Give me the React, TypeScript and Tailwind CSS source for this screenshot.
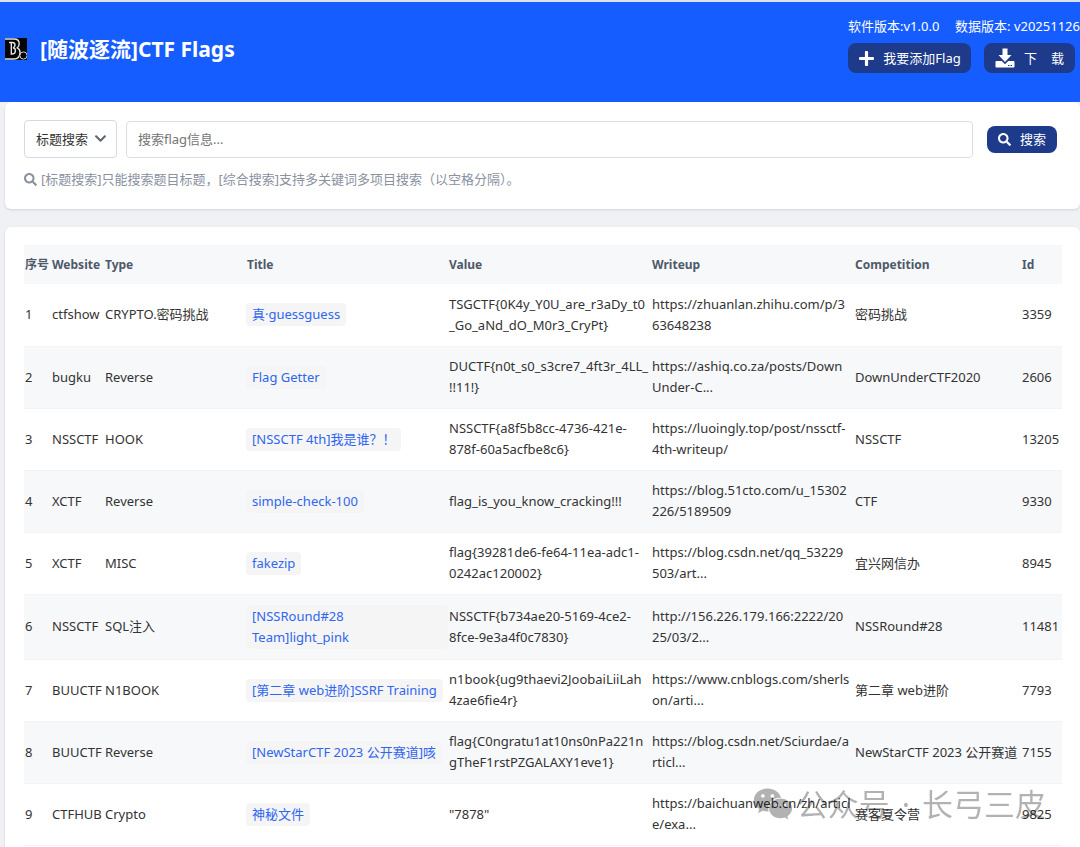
import { useState } from 'react';
import { FaChevronDown, FaPlus, FaSearch, FaWeixin } from 'react-icons/fa';

interface FlagRow {
  website: string;
  type: string;
  title: string;
  value: string;
  writeup: string;
  competition: string;
  id: number;
}

const flags: FlagRow[] = [
  {
    website: 'ctfshow',
    type: 'CRYPTO.密码挑战',
    title: '真·guessguess',
    value: 'TSGCTF{0K4y_Y0U_are_r3aDy_t0\n_Go_aNd_dO_M0r3_CryPt}',
    writeup: 'https://zhuanlan.zhihu.com/p/3\n63648238',
    competition: '密码挑战',
    id: 3359,
  },
  {
    website: 'bugku',
    type: 'Reverse',
    title: 'Flag Getter',
    value: 'DUCTF{n0t_s0_s3cre7_4ft3r_4LL_\n!!11!}',
    writeup: 'https://ashiq.co.za/posts/Down\nUnder-C...',
    competition: 'DownUnderCTF2020',
    id: 2606,
  },
  {
    website: 'NSSCTF',
    type: 'HOOK',
    title: '[NSSCTF 4th]我是谁？！',
    value: 'NSSCTF{a8f5b8cc-4736-421e-\n878f-60a5acfbe8c6}',
    writeup: 'https://luoingly.top/post/nssctf-\n4th-writeup/',
    competition: 'NSSCTF',
    id: 13205,
  },
  {
    website: 'XCTF',
    type: 'Reverse',
    title: 'simple-check-100',
    value: 'flag_is_you_know_cracking!!!',
    writeup: 'https://blog.51cto.com/u_15302\n226/5189509',
    competition: 'CTF',
    id: 9330,
  },
  {
    website: 'XCTF',
    type: 'MISC',
    title: 'fakezip',
    value: 'flag{39281de6-fe64-11ea-adc1-\n0242ac120002}',
    writeup: 'https://blog.csdn.net/qq_53229\n503/art...',
    competition: '宜兴网信办',
    id: 8945,
  },
  {
    website: 'NSSCTF',
    type: 'SQL注入',
    title: '[NSSRound#28\nTeam]light_pink',
    value: 'NSSCTF{b734ae20-5169-4ce2-\n8fce-9e3a4f0c7830}',
    writeup: 'http://156.226.179.166:2222/20\n25/03/2...',
    competition: 'NSSRound#28',
    id: 11481,
  },
  {
    website: 'BUUCTF',
    type: 'N1BOOK',
    title: '[第二章 web进阶]SSRF Training',
    value: 'n1book{ug9thaevi2JoobaiLiiLah\n4zae6fie4r}',
    writeup: 'https://www.cnblogs.com/sherls\non/arti...',
    competition: '第二章 web进阶',
    id: 7793,
  },
  {
    website: 'BUUCTF',
    type: 'Reverse',
    title: '[NewStarCTF 2023 公开赛道]咳',
    value: 'flag{C0ngratu1at10ns0nPa221n\ngTheF1rstPZGALAXY1eve1}',
    writeup: 'https://blog.csdn.net/Sciurdae/a\nrticl...',
    competition: 'NewStarCTF 2023 公开赛道',
    id: 7155,
  },
  {
    website: 'CTFHUB',
    type: 'Crypto',
    title: '神秘文件',
    value: '"7878"',
    writeup: 'https://baichuanweb.cn/zh/articl\ne/exa...',
    competition: '赛客夏令营',
    id: 9825,
  },
];

const columns = [
  { label: '序号', width: 'w-[27px]' },
  { label: 'Website', width: 'w-[53px]' },
  { label: 'Type', width: 'w-[142px]' },
  { label: 'Title', width: 'w-[202px]' },
  { label: 'Value', width: 'w-[203px]' },
  { label: 'Writeup', width: 'w-[203px]' },
  { label: 'Competition', width: 'w-[167px]' },
  { label: 'Id', width: 'w-[41px]' },
];

function Logo() {
  return (
    <svg viewBox="0 0 22 22" className="size-[22px]" aria-hidden="true">
      <rect width="22" height="22" fill="#050505" />
      <path
        d="M0 1h9c3.500 0 5.200 1.800 5.200 4.600 0 2-.7 3.200-1.900 4.200 2 1 2.700 2.500 2.700 4.500 0 4.200-2.400 6.700-6.200 6.700H0"
        fill="none"
        stroke="#e4e4e4"
        strokeWidth="1.4"
      />
      <path
        d="M4 4.500h3.500c3.200 0 3.200 4.600.5 5.200 3.400.6 3.200 6.300-.5 6.300H6.300V4.500"
        fill="none"
        stroke="#e4e4e4"
        strokeWidth="1.4"
      />
      <circle cx="18.500" cy="17.500" r="3.600" fill="#050505" stroke="#d0d0d0" strokeWidth="1" />
    </svg>
  );
}

function DownloadIcon() {
  return (
    <svg viewBox="0 0 20 20" className="size-5" aria-hidden="true">
      <path d="M7.500 0.500h5v6.500h4L10 14 3.500 7h4z" fill="#fff" />
      <path d="M1.500 13h5.200L10 16.300 13.300 13h5.200c.6 0 1 .4 1 1v4.500c0 .6-.4 1-1 1h-17c-.6 0-1-.4-1-1V14c0-.6.4-1 1-1z" fill="#fff" />
      <path d="M13 17.500h1.500M15.500 17.500H17" stroke="#1e3a8a" />
    </svg>
  );
}

export default function App() {
  const [mode, setMode] = useState('title');
  const [keyword, setKeyword] = useState('');

  return (
    <div className="min-h-screen overflow-x-hidden bg-[#f0f1f5] font-['Noto_Sans','Noto_Sans_CJK_SC',sans-serif] text-[13px] leading-[21px] text-[#333]">
      <header className="flex h-[102px] justify-between border-t-2 border-[#dde3ee] bg-[#165dff] pl-[5px] text-white">
        <div className="flex h-[93px] items-center gap-[13px]">
          <Logo />
          <h1 className="text-[21px] leading-7 font-bold whitespace-nowrap">[随波逐流]CTF Flags</h1>
        </div>
        <div className="flex w-[232px] flex-col pt-[14px]">
          <div className="flex justify-between whitespace-nowrap">
            <span>软件版本:v1.0.0</span>
            <span>数据版本: v20251126</span>
          </div>
          <div className="mt-[6px] flex gap-[13px] pr-[5px]">
            <button className="flex h-[30px] flex-1 items-center justify-center gap-2 rounded-lg bg-[#1e3a8a] whitespace-nowrap">
              <FaPlus className="size-[17px]" />
              我要添加Flag
            </button>
            <button className="flex h-[30px] items-center gap-[9px] rounded-lg bg-[#1e3a8a] px-[11px]">
              <DownloadIcon />
              <span className="flex gap-[14px]">
                <span>下</span>
                <span>载</span>
              </span>
            </button>
          </div>
        </div>
      </header>

      <main className="pl-[5px]">
        <section className="rounded-md bg-white px-[19px] pt-[18px] pb-[19px] shadow-sm">
          <div className="flex items-center">
            <div className="relative">
              <select
                aria-label="搜索方式"
                value={mode}
                onChange={(e) => setMode(e.target.value)}
                className="h-[38px] w-[93px] appearance-none rounded border border-[#d5d9e0] bg-white pl-[11px]"
              >
                <option value="title">标题搜索</option>
                <option value="all">综合搜索</option>
              </select>
              <FaChevronDown className="pointer-events-none absolute top-3 right-[10px] size-[13px] text-[#5f6770]" />
            </div>
            <input
              type="text"
              aria-label="搜索flag信息"
              placeholder="搜索flag信息..."
              value={keyword}
              onChange={(e) => setKeyword(e.target.value)}
              className="ml-[9px] h-[37px] min-w-0 flex-1 rounded border border-[#dcdee2] px-[11px] placeholder:text-[#757575]"
            />
            <button className="mr-1 ml-[14px] flex h-[27px] w-[70px] items-center justify-center gap-[9px] rounded-lg bg-[#1e3a8a] text-white">
              <FaSearch className="size-[13px]" />
              搜索
            </button>
          </div>
          <p className="mt-[11px] flex items-center gap-1 text-[#8a919f]">
            <FaSearch className="size-[13px]" />
            [标题搜索]只能搜索题目标题，[综合搜索]支持多关键词多项目搜索（以空格分隔）。
          </p>
        </section>

        <section className="mt-[18px] rounded-md bg-white py-[18px] pr-[18px] pl-[19px] shadow-sm">
          <table className="w-full table-fixed border-collapse">
            <thead>
              <tr className="h-[39px] bg-[#f7f8fa] text-left text-[#4e5969]">
                {columns.map((col) => (
                  <th key={col.label} className={`${col.width} px-px text-[12px] font-bold whitespace-nowrap`}>
                    {col.label}
                  </th>
                ))}
              </tr>
            </thead>
            <tbody>
              {flags.map((flag, index) => (
                <tr
                  key={flag.id}
                  className="h-[62px] border-b border-[#f2f3f5] whitespace-pre even:bg-[#f7f8fa]"
                >
                  <td className="px-px">{index + 1}</td>
                  <td className="px-px">{flag.website}</td>
                  <td className="px-px">{flag.type}</td>
                  <td className="py-[10px]">
                    <a
                      href="#"
                      className={`rounded bg-[#f5f5f5] px-[6px] py-px text-[#2f66f0] ${
                        flag.title.includes('\n') ? 'block' : 'inline-block'
                      }`}
                    >
                      {flag.title}
                    </a>
                  </td>
                  <td className="px-px">{flag.value}</td>
                  <td className="px-px">{flag.writeup}</td>
                  <td className="px-px">{flag.competition}</td>
                  <td className="px-px">{flag.id}</td>
                </tr>
              ))}
            </tbody>
          </table>
        </section>
      </main>

      <div className="pointer-events-none fixed right-[34px] bottom-5 flex items-center gap-1 text-[31px] leading-[46px] whitespace-nowrap text-black opacity-30">
        <FaWeixin className="size-10" />
        <span className="flex gap-3">
          <span>公众号</span>
          <span>·</span>
          <span>长弓三皮</span>
        </span>
      </div>
    </div>
  );
}
